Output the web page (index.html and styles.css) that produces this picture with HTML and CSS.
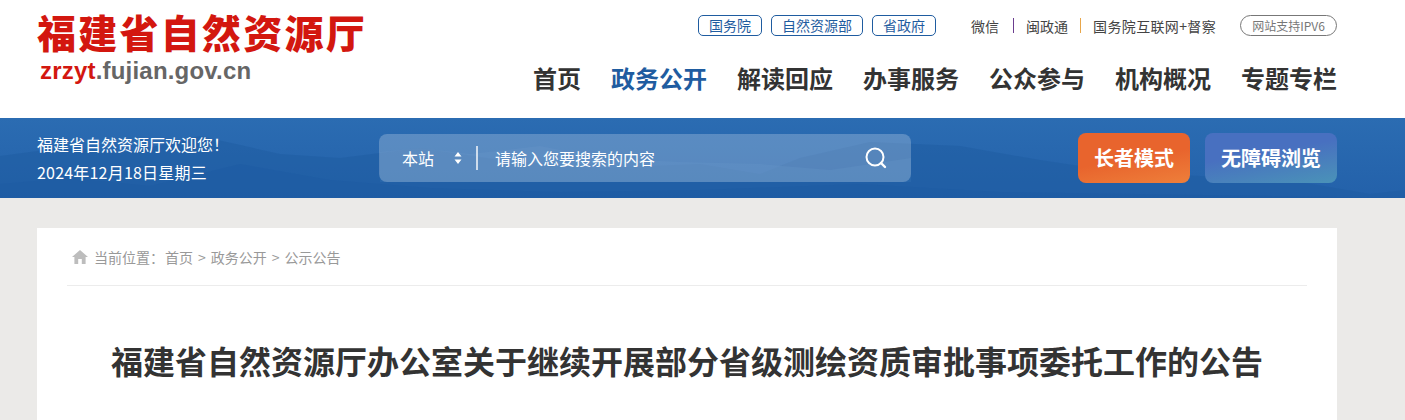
FILE: index.html
```html
<!DOCTYPE html>
<html lang="zh-CN">
<head>
    <meta charset="UTF-8">
    <meta name="viewport" content="width=device-width, initial-scale=1.0">
    <title>福建省自然资源厅</title>
    <link rel="stylesheet" href="styles.css">
</head>
<body>
    <header class="header">
        <div class="wrap header-inner">
            <div class="logo">
                <div class="logo-name">福建省自然资源厅</div>
                <div class="logo-url"><span class="logo-red">zrzyt</span>.fujian.gov.cn</div>
            </div>
            <div class="header-right">
                <div class="top-links">
                    <a class="pill">国务院</a>
                    <a class="pill">自然资源部</a>
                    <a class="pill">省政府</a>
                    <div class="plain-links">
                        <a>微信</a>
                        <i class="sep sep-purple"></i>
                        <a>闽政通</a>
                        <i class="sep sep-orange"></i>
                        <a class="duban">国务院互联网+督察</a>
                    </div>
                    <span class="ipv6">网站支持IPV6</span>
                </div>
                <nav class="nav">
                    <a>首页</a>
                    <a class="active">政务公开</a>
                    <a>解读回应</a>
                    <a>办事服务</a>
                    <a>公众参与</a>
                    <a>机构概况</a>
                    <a>专题专栏</a>
                </nav>
            </div>
        </div>
    </header>

    <section class="banner">
        <svg class="mountains" viewBox="0 0 1405 80" preserveAspectRatio="none" aria-hidden="true">
            <path fill="#1f5da3" opacity="0.55" d="M0 38 L60 30 L130 34 L200 18 L280 36 L340 40 L420 30 L500 42 L600 50 L700 46 L760 56 L800 40 L870 24 L960 28 L1040 42 L1120 54 L1200 58 L1300 64 L1370 76 L1405 72 V80 H0 Z"/>
            <path fill="#1e5ca4" opacity="0.6" d="M0 66 L70 60 L150 68 L240 46 L330 62 L430 70 L560 74 L700 72 L860 66 L1000 74 L1405 80 H0 Z"/>
            <path fill="#3f7cbd" opacity="0.25" d="M380 34 L420 30 L470 36 L540 28 L600 40 L680 44 L760 46 L830 52 L911 40 V64 H380 Z"/>
        </svg>
        <div class="wrap banner-inner">
            <div class="welcome">
                <p>福建省自然资源厅欢迎您！</p>
                <p class="date">2024年12月18日星期三</p>
            </div>
            <div class="search">
                <span class="scope">本站</span>
                <svg class="updown" width="8" height="14" viewBox="0 0 8 14"><path fill="#fff" d="M4 1 L7.5 5.5 H.5 Z M.5 8.5 H7.5 L4 13 Z"/></svg>
                <i class="search-sep"></i>
                <span class="placeholder">请输入您要搜索的内容</span>
                <svg class="search-icon" width="24" height="24" viewBox="0 0 24 24"><circle cx="11" cy="11" r="8.5" fill="none" stroke="#fff" stroke-width="2"/><path d="M17 17 L21 21" stroke="#fff" stroke-width="2.4" stroke-linecap="round"/></svg>
            </div>
            <div class="modes">
                <a class="mode mode-elder">长者模式</a>
                <a class="mode mode-access">无障碍浏览</a>
            </div>
        </div>
    </section>

    <main class="wrap card">
        <div class="crumbs">
            <svg width="16" height="14" viewBox="0 0 16 14"><path fill="#bdbdbd" d="M8 0 L16 7 H13.6 V14 H9.8 V9 H6.2 V14 H2.4 V7 H0 Z"/></svg>
            <span class="here">当前位置：</span><a>首页</a><span class="gt">&gt;</span><a>政务公开</a><span class="gt">&gt;</span><a>公示公告</a>
        </div>
        <h1 class="title">福建省自然资源厅办公室关于继续开展部分省级测绘资质审批事项委托工作的公告</h1>
    </main>
</body>
</html>
```

FILE: styles.css
```css
* {
    box-sizing: border-box;
}
html, body {
    height: 420px;
    overflow: hidden;
}
body {
    margin: 0;
    background: #ebeae8;
    font-family: "Noto Sans CJK SC", "Liberation Sans", sans-serif;
    color: #333;
}
p, h1 {
    margin: 0;
}
.wrap {
    width: 1300px;
    margin-left: 37px;
}
.header {
    background: #fff;
    height: 118px;
}
.header-inner {
    display: flex;
    justify-content: space-between;
}
.logo {
    padding-top: 6px;
}
.logo-name {
    font-family: "Noto Sans CJK SC", serif;
    font-weight: 900;
    font-size: 39px;
    letter-spacing: 2.25px;
    line-height: 51px;
    color: #d3170f;
}
.logo-url {
    font-family: "Liberation Sans", sans-serif;
    font-weight: 700;
    font-size: 24px;
    letter-spacing: 0.2px;
    line-height: 28px;
    padding-left: 3px;
    color: #666;
}
.logo-red {
    color: #d3170f;
}
.header-right {
    display: flex;
    flex-direction: column;
    align-items: flex-end;
}
.top-links {
    display: flex;
    align-items: center;
    gap: 9px;
    height: 21px;
    margin-top: 15px;
}
.pill {
    height: 21px;
    line-height: 19px;
    padding: 0 10px;
    border: 1px solid #1f5ca0;
    border-radius: 5px;
    font-size: 14px;
    color: #1f5ca0;
}
.plain-links {
    display: flex;
    align-items: center;
    gap: 12px;
    margin-left: 26px;
    margin-right: 15px;
    font-size: 14px;
    color: #444;
}
.duban {
    letter-spacing: 0.35px;
}
.sep {
    width: 1px;
    height: 15px;
}
.sep-purple {
    background: #6b3d8f;
    margin-left: 2px;
}
.sep-orange {
    background: #e8a64a;
}
.ipv6 {
    width: 97px;
    height: 21px;
    line-height: 19px;
    text-align: center;
    border: 1px solid #777;
    border-radius: 11px;
    font-size: 12px;
    color: #777;
}
.nav {
    display: flex;
    gap: 30px;
    margin-top: 24px;
    font-size: 24px;
    font-weight: 700;
    line-height: 36px;
    color: #333;
}
.nav .active {
    color: #1f5ca0;
}
.banner {
    position: relative;
    height: 80px;
    background: linear-gradient(180deg, #2b6cb2 0%, #2361aa 100%);
    overflow: hidden;
}
.mountains {
    position: absolute;
    left: 0;
    top: 0;
    width: 100%;
    height: 100%;
}
.banner-inner {
    position: relative;
    display: flex;
    align-items: center;
    height: 80px;
}
.welcome {
    width: 342px;
    font-size: 16px;
    line-height: 28px;
    color: #fff;
}
.date {
    letter-spacing: 0.2px;
}
.search {
    display: flex;
    align-items: center;
    width: 532px;
    height: 48px;
    padding: 0 23px;
    background: rgba(255, 255, 255, 0.23);
    border-radius: 8px;
    font-size: 16px;
    color: #fff;
}
.updown {
    margin-left: 20px;
}
.search-sep {
    width: 2px;
    height: 24px;
    margin: 0 17px 0 14px;
    background: rgba(255, 255, 255, 0.7);
}
.placeholder {
    flex: 1;
}
.modes {
    display: flex;
    gap: 15px;
    margin-left: 167px;
}
.mode {
    height: 50px;
    line-height: 50px;
    border-radius: 8px;
    text-align: center;
    font-size: 20px;
    font-weight: 700;
    color: #fff;
}
.mode-elder {
    width: 112px;
    background: linear-gradient(170deg, #e8642d 50%, #ee7f3a 100%);
}
.mode-access {
    width: 132px;
    background: linear-gradient(170deg, #4870c0 40%, #4a93b8 100%);
}
.card {
    height: 192px;
    margin-top: 30px;
    padding: 0 30px;
    background: #fff;
}
.crumbs {
    display: flex;
    align-items: center;
    height: 58px;
    padding-left: 5px;
    border-bottom: 1px solid #ececec;
    font-size: 14px;
    color: #999;
}
.crumbs svg {
    margin-right: 6px;
}
.here {
    margin-right: 1px;
}
.gt {
    margin: 0 5px;
}
.title {
    margin-top: 51px;
    text-align: center;
    font-size: 32px;
    font-weight: 700;
    line-height: 46px;
    color: #333;
}
```
